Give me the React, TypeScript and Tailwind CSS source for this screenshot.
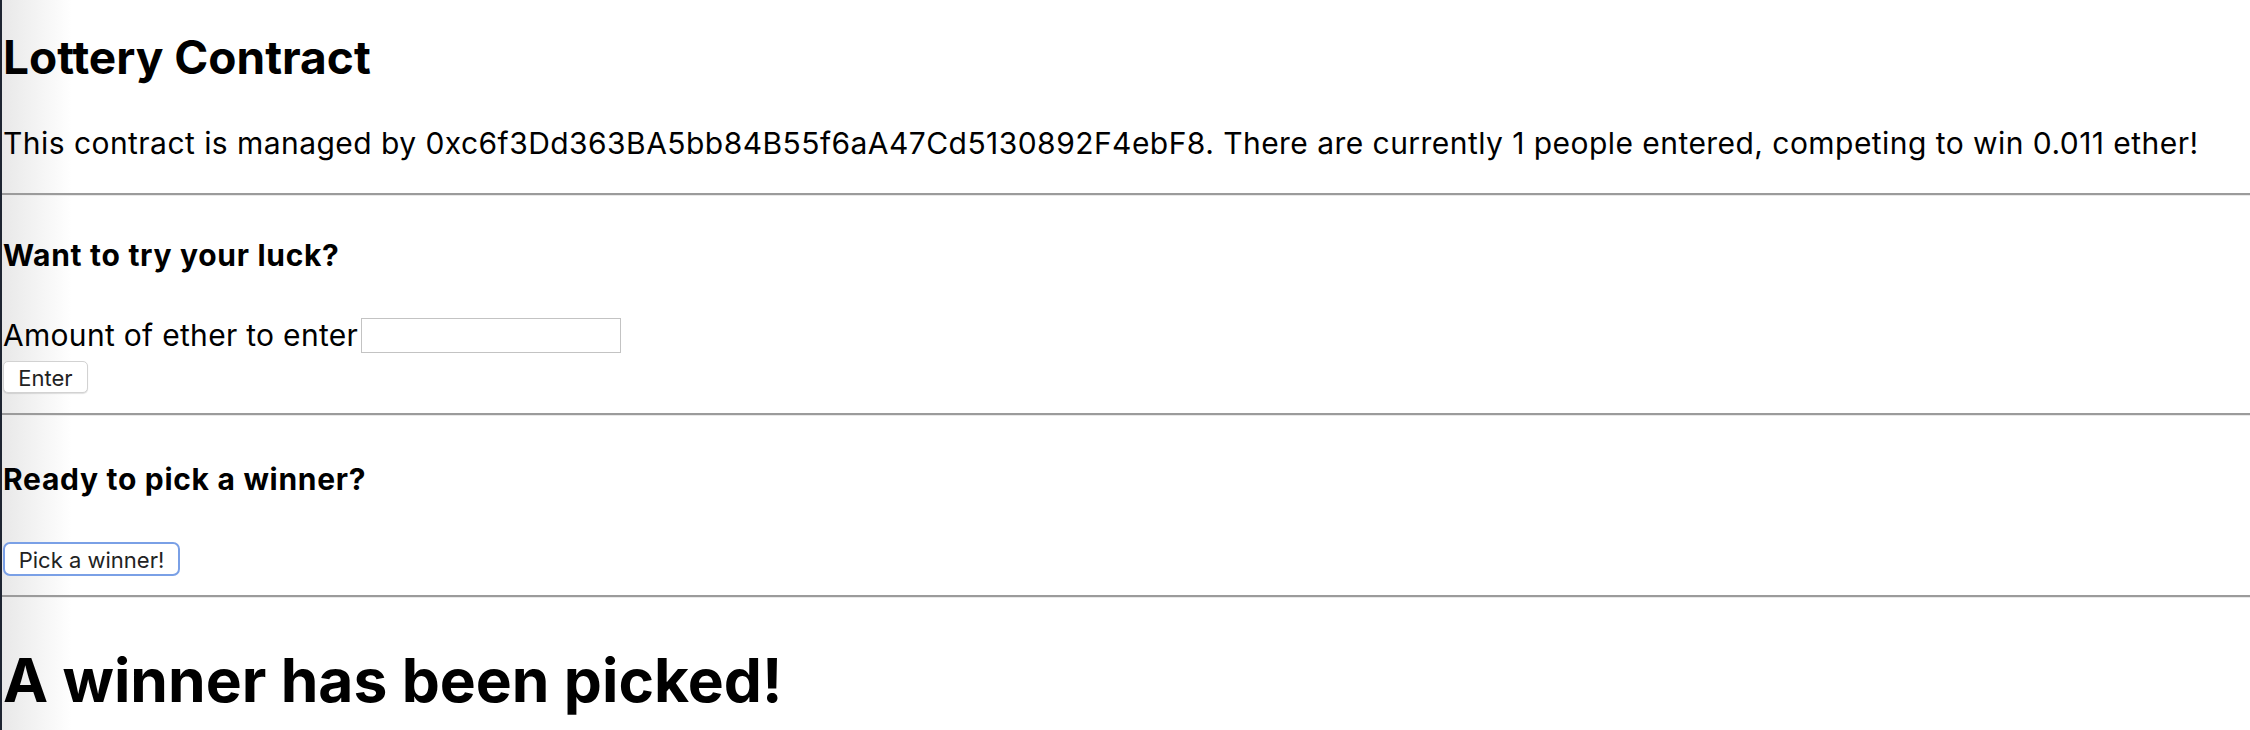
import React from 'react';

const Rule = () => <hr className="border-0 border-t-2 border-b border-t-[#9b9b9b] border-b-[#e9e9e9]" />;

export default function App() {
  return (
    <div className="flex min-h-[730px] bg-white text-black" style={{ fontFamily: 'Inter, "Noto Sans", sans-serif' }}>
      {/* window edge */}
      <div className="w-[2px] shrink-0 bg-[#1d2431]" />
      <div className="flex-1 bg-[linear-gradient(to_right,#e8e8e8,#ffffff_70px)]">
        <h1 className="mt-[28px] pl-[1px] text-[46px] leading-[58px] font-bold">Lottery Contract</h1>
        <p className="mt-[39px] pl-[1px] text-[30px] leading-[36px] tracking-[0.45px]">
          This contract is managed by 0xc6f3Dd363BA5bb84B55f6aA47Cd5130892F4ebF8. There are currently 1 people
          entered, competing to win 0.011 ether!
        </p>
        <div className="mt-[32px]">
          <Rule />
        </div>

        {/* enter section */}
        <h4 className="mt-[41px] pl-[1px] text-[30px] leading-[36px] font-bold tracking-[0.7px]">Want to try your luck?</h4>
        <div className="mt-[44px] flex items-center">
          <label className="pl-[1px] text-[30px] leading-[36px] tracking-[0.3px]">Amount of ether to enter</label>
          <input className="ml-[3px] h-[35px] w-[260px] border border-[#c3c3c3] bg-white" />
        </div>
        <button className="mt-[8px] ml-[1px] h-[32px] w-[85px] rounded-[5px] border border-[#d2d2d2] bg-white text-[22px] text-[#222] shadow-[0_1px_1px_rgba(0,0,0,0.12)]">
          Enter
        </button>
        <div className="mt-[20px]">
          <Rule />
        </div>

        {/* pick winner section */}
        <h4 className="mt-[45px] pl-[1px] text-[30px] leading-[36px] font-bold tracking-[0.7px]">Ready to pick a winner?</h4>
        <button className="mt-[45px] ml-[1px] h-[34px] w-[177px] rounded-[7px] border-2 border-[#7aa0e6] bg-white text-[22px] text-[#222]">
          Pick a winner!
        </button>
        <div className="mt-[19px]">
          <Rule />
        </div>

        <h1 className="mt-[45px] pl-[1px] text-[60.5px] leading-[75px] font-bold">A winner has been picked!</h1>
      </div>
    </div>
  );
}
